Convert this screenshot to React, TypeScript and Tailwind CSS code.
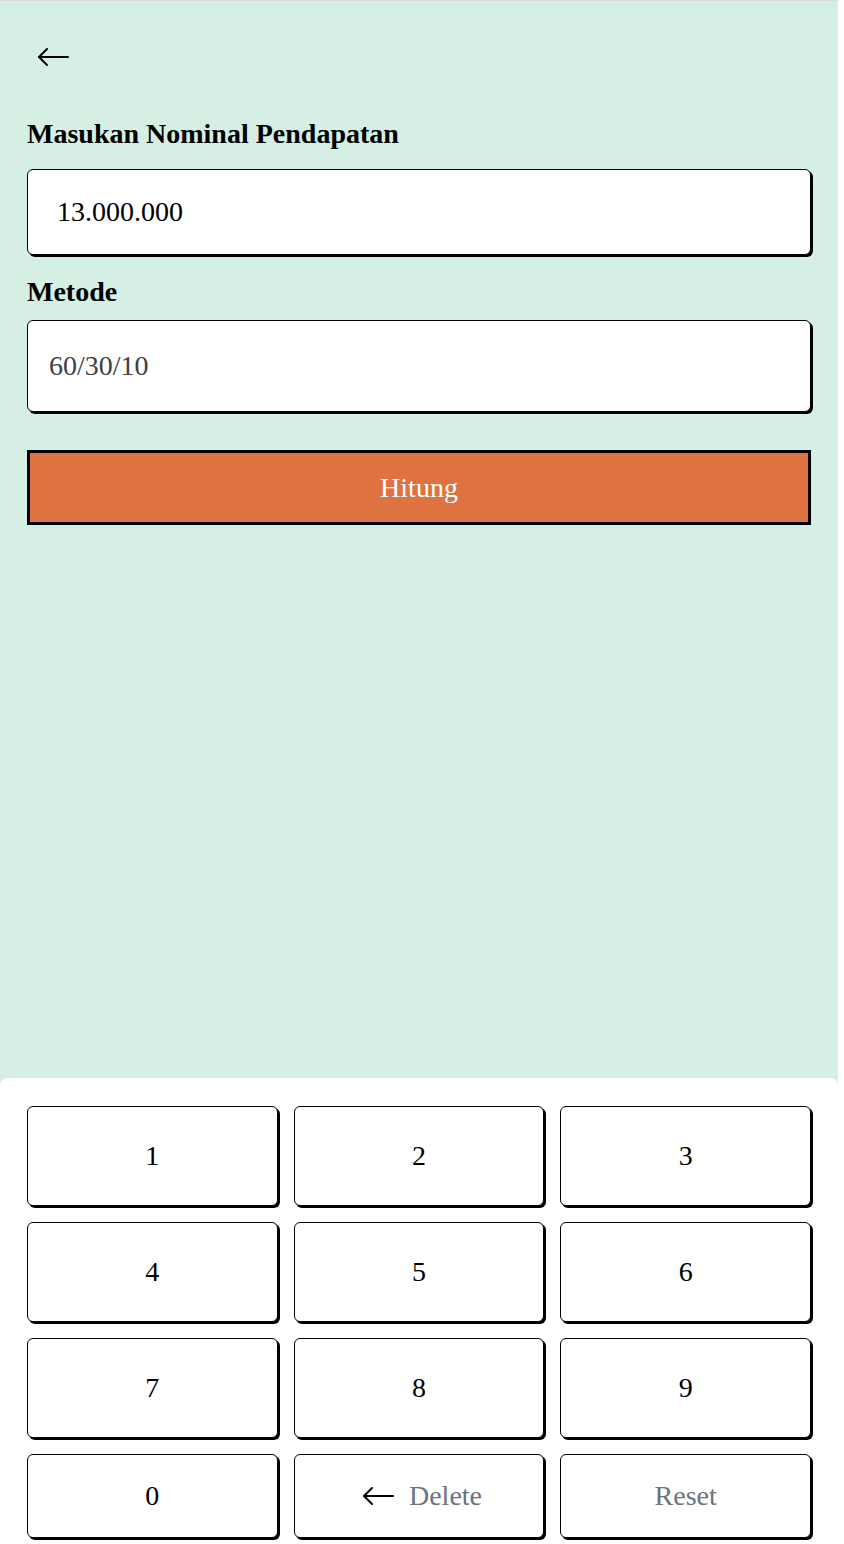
import React from "react";

function Arrow({ className = "" }: { className?: string }) {
  return (
    <svg
      width="32"
      height="20"
      viewBox="0 0 32 20"
      fill="none"
      stroke="currentColor"
      strokeWidth="2"
      strokeLinecap="round"
      strokeLinejoin="round"
      className={className}
    >
      <path d="M31 10H2" />
      <path d="M10 2L2 10l8 8" />
    </svg>
  );
}

const keys = ["1", "2", "3", "4", "5", "6", "7", "8", "9"];

export default function App() {
  return (
    <div className="w-[844px] h-[1544px] bg-white flex font-['Liberation_Serif',serif] text-black">
      <div className="w-[838px] flex flex-col bg-[#d5efe4] border-t border-[#d8dcd9]">
        <section className="flex-1 px-[27px]">
          <div className="pt-[46px] pl-[10px]">
            <Arrow className="text-black" />
          </div>
          <h1 className="mt-[51px] text-[28px] leading-[32px] font-bold">Masukan Nominal Pendapatan</h1>
          <input
            readOnly
            value="13.000.000"
            className="mt-[19px] w-full h-[86px] bg-white rounded-md border border-black shadow-[2px_2px_0_0_#000] px-[29px] text-[28px] outline-none"
          />
          <h2 className="mt-[21px] text-[28px] leading-[32px] font-bold">Metode</h2>
          <input
            readOnly
            value="60/30/10"
            className="mt-[12px] w-full h-[92px] bg-white rounded-md border border-black shadow-[2px_2px_0_0_#000] px-[21px] text-[28px] text-[#3f3f46] outline-none"
          />
          <button className="mt-[38px] w-full h-[75px] bg-[#de7341] border-[3px] border-black text-white text-[28px]">
            Hitung
          </button>
        </section>
        <section className="bg-white rounded-t-lg px-[27px] pt-[28px] pb-[6px]">
          <div className="grid grid-cols-3 gap-x-4 gap-y-4">
            {keys.map((k) => (
              <button
                key={k}
                className="h-[100px] rounded-md border border-black shadow-[2px_2px_0_0_#000] bg-white text-[28px]"
              >
                {k}
              </button>
            ))}
            <button className="h-[84px] rounded-md border border-black shadow-[2px_2px_0_0_#000] bg-white text-[28px]">
              0
            </button>
            <button className="h-[84px] rounded-md border border-black shadow-[2px_2px_0_0_#000] bg-white text-[28px] text-[#6b7280] flex items-center justify-center gap-[15px] pl-[6px]">
              <Arrow className="text-black" />
              Delete
            </button>
            <button className="h-[84px] rounded-md border border-black shadow-[2px_2px_0_0_#000] bg-white text-[28px] text-[#6b7280]">
              Reset
            </button>
          </div>
        </section>
      </div>
    </div>
  );
}
